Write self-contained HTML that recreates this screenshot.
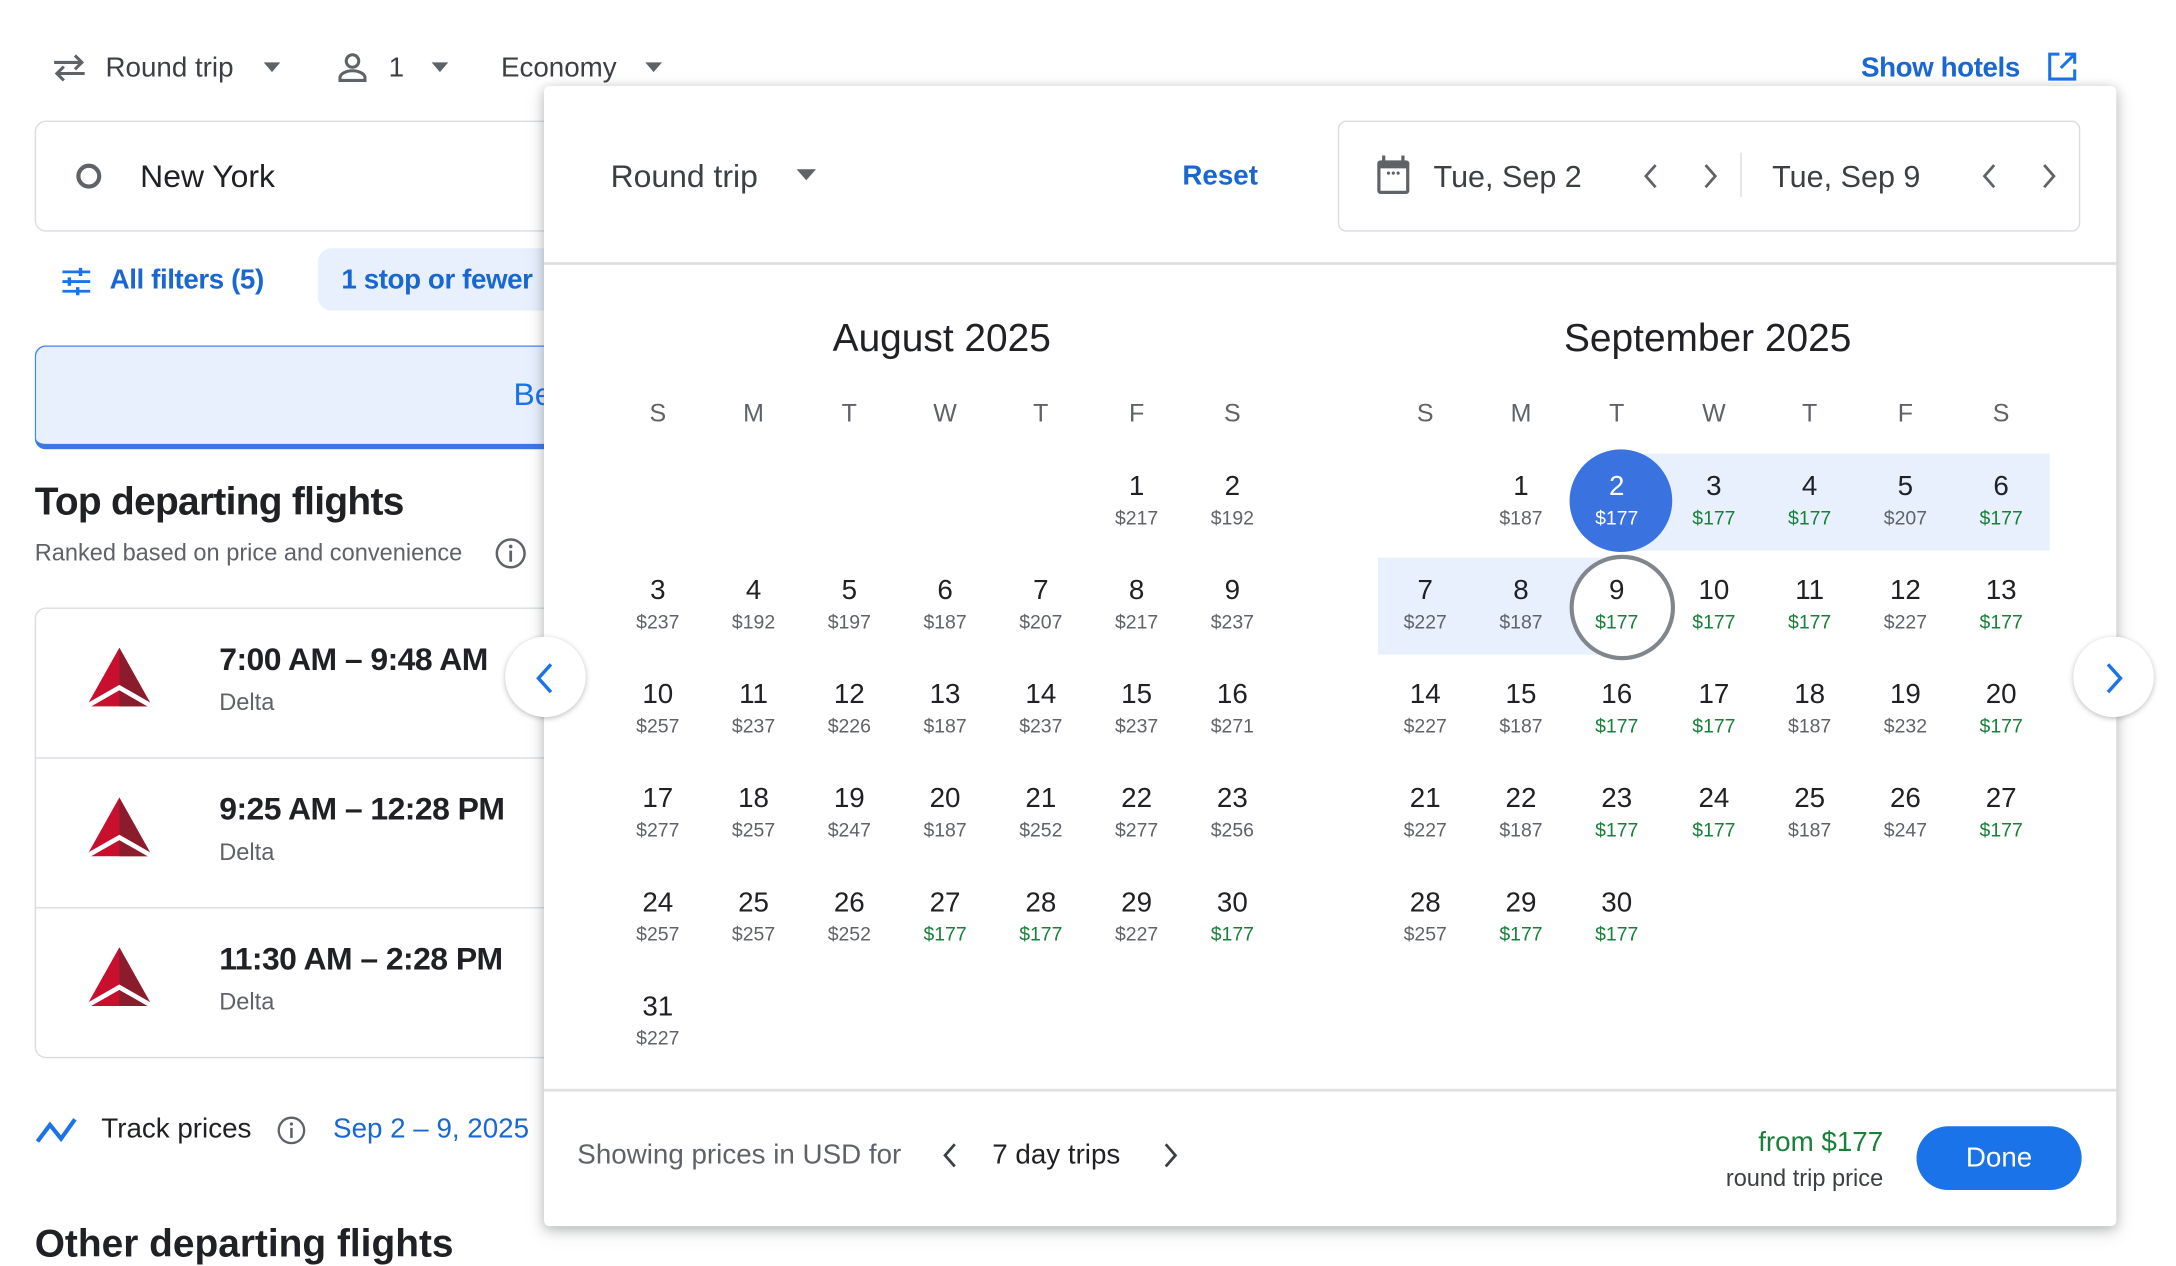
<!DOCTYPE html>
<html><head><meta charset="utf-8"><style>
html,body{margin:0;padding:0;background:#fff;overflow:hidden;width:2176px;height:1258px}
#w{position:absolute;left:0;top:0;width:1568px;height:907px;transform:scale(1.38776,1.38699);transform-origin:0 0;font-family:"Liberation Sans",Arial,sans-serif;color:#202124}
.a{position:absolute}
.c{position:absolute;width:70px;text-align:center}
.c b{display:block;font-weight:normal;font-size:20px;line-height:24px;color:#202124}
.c i{display:block;font-style:normal;font-size:14px;line-height:20px;color:#5f6368}
.c i.g{color:#188038}
.h{position:absolute;width:70px;text-align:center;font-size:18px;color:#5f6368;top:288px}
</style></head><body><div id="w">
<!-- top bar -->
<svg class="a" style="left:37px;top:37px" width="26" height="24" viewBox="0 0 26 24"><path d="M2 8h20M17 3l5 5-5 5M24 16H4M9 11l-5 5 5 5" fill="none" stroke="#5f6368" stroke-width="2.2"/></svg>
<div class="a" style="left:76px;top:38px;font-size:20px;color:#3c4043">Round trip</div>
<div class="a" style="left:190px;top:45px;border:6px solid transparent;border-top:7px solid #5f6368"></div>
<svg class="a" style="left:243px;top:37px" width="22" height="24" viewBox="0 0 22 24"><circle cx="11" cy="7" r="4.5" fill="none" stroke="#5f6368" stroke-width="2.2"/><path d="M2 21v-2c0-3 5-5 9-5s9 2 9 5v2z" fill="none" stroke="#5f6368" stroke-width="2.2"/></svg>
<div class="a" style="left:280px;top:38px;font-size:20px;color:#3c4043">1</div>
<div class="a" style="left:311px;top:45px;border:6px solid transparent;border-top:7px solid #5f6368"></div>
<div class="a" style="left:361px;top:38px;font-size:20px;color:#3c4043">Economy</div>
<div class="a" style="left:465px;top:45px;border:6px solid transparent;border-top:7px solid #5f6368"></div>
<div class="a" style="left:1341px;top:38px;font-size:20px;font-weight:bold;color:#1967d2;letter-spacing:-0.3px">Show hotels</div>
<svg class="a" style="left:1474px;top:36px" width="24" height="24" viewBox="0 0 24 24"><path d="M10 3H3v18h18v-7M14 3h7v7M21 3L11 13" fill="none" stroke="#1a73e8" stroke-width="2.2"/></svg>
<!-- left column -->
<div class="a" style="left:25px;top:87px;width:420px;height:78px;border:1px solid #dadce0;border-radius:8px"></div>
<div class="a" style="left:55px;top:118px;width:12px;height:12px;border:3.5px solid #5f6368;border-radius:50%"></div>
<div class="a" style="left:101px;top:114px;font-size:23px;color:#202124">New York</div>
<svg class="a" style="left:44px;top:193px" width="22" height="20" viewBox="0 0 22 20"><path d="M1 3h20M1 10h20M1 17h20" stroke="#1a73e8" stroke-width="2"/><path d="M14 0v6M6 7v6M12 14v6" stroke="#1a73e8" stroke-width="2.5"/></svg>
<div class="a" style="left:79px;top:191px;font-size:20px;color:#1967d2;font-weight:bold;letter-spacing:-0.3px">All filters (5)</div>
<div class="a" style="left:229px;top:179px;width:200px;height:45px;background:#e8f0fe;border-radius:10px"></div>
<div class="a" style="left:246px;top:191px;font-size:20px;color:#1967d2;font-weight:bold;letter-spacing:-0.3px">1 stop or fewer</div>
<div class="a" style="left:25px;top:249px;width:420px;height:70px;background:#e8f0fe;border:1px solid #4285f4;border-radius:8px;border-bottom:4px solid #3b78e7"></div>
<div class="a" style="left:370px;top:271px;font-size:23px;color:#1a73e8">Be</div>
<div class="a" style="left:25px;top:346px;font-size:28px;font-weight:bold;letter-spacing:-0.5px">Top departing flights</div>
<div class="a" style="left:25px;top:389px;font-size:17px;color:#5f6368">Ranked based on price and convenience</div>
<svg class="a" style="left:356px;top:387px" width="24" height="24" viewBox="0 0 24 24"><circle cx="12" cy="12" r="10" fill="none" stroke="#5f6368" stroke-width="1.8"/><path d="M12 10v8" stroke="#5f6368" stroke-width="2"/><circle cx="12" cy="7" r="1.3" fill="#5f6368"/></svg>
<div class="a" style="left:25px;top:438px;width:420px;height:323px;border:1px solid #dadce0;border-radius:8px"></div>
<div class="a" style="left:26px;top:546px;width:420px;height:1px;background:#dadce0"></div>
<div class="a" style="left:26px;top:654px;width:420px;height:1px;background:#dadce0"></div>
<svg class="a" style="left:60px;top:467px" width="52" height="44" viewBox="0 0 30 26"><path d="M15 0L1 25h28z" fill="#c8102e"/><path d="M15 0L29 25H15z" fill="#8a1c2b"/><path d="M1 25l14-8 14 8" fill="none" stroke="#fff" stroke-width="2"/></svg>
<svg class="a" style="left:60px;top:575px" width="52" height="44" viewBox="0 0 30 26"><path d="M15 0L1 25h28z" fill="#c8102e"/><path d="M15 0L29 25H15z" fill="#8a1c2b"/><path d="M1 25l14-8 14 8" fill="none" stroke="#fff" stroke-width="2"/></svg>
<svg class="a" style="left:60px;top:683px" width="52" height="44" viewBox="0 0 30 26"><path d="M15 0L1 25h28z" fill="#c8102e"/><path d="M15 0L29 25H15z" fill="#8a1c2b"/><path d="M1 25l14-8 14 8" fill="none" stroke="#fff" stroke-width="2"/></svg>
<div class="a" style="left:158px;top:462px;font-size:23px;font-weight:bold;letter-spacing:-0.4px">7:00 AM – 9:48 AM</div>
<div class="a" style="left:158px;top:497px;font-size:17px;color:#5f6368">Delta</div>
<div class="a" style="left:158px;top:570px;font-size:23px;font-weight:bold;letter-spacing:-0.4px">9:25 AM – 12:28 PM</div>
<div class="a" style="left:158px;top:605px;font-size:17px;color:#5f6368">Delta</div>
<div class="a" style="left:158px;top:678px;font-size:23px;font-weight:bold;letter-spacing:-0.4px">11:30 AM – 2:28 PM</div>
<div class="a" style="left:158px;top:713px;font-size:17px;color:#5f6368">Delta</div>
<svg class="a" style="left:25px;top:803px" width="34" height="24" viewBox="0 0 34 24"><path d="M2 20l9-12 8 10 10-14" fill="none" stroke="#1a73e8" stroke-width="3"/></svg>
<div class="a" style="left:73px;top:803px;font-size:20px">Track prices</div>
<svg class="a" style="left:199px;top:804px" width="22" height="22" viewBox="0 0 24 24"><circle cx="12" cy="12" r="10" fill="none" stroke="#5f6368" stroke-width="1.8"/><path d="M12 10v8" stroke="#5f6368" stroke-width="2"/><circle cx="12" cy="7" r="1.3" fill="#5f6368"/></svg>
<div class="a" style="left:240px;top:803px;font-size:20px;color:#1967d2">Sep 2 – 9, 2025</div>
<div class="a" style="left:25px;top:881px;font-size:28px;font-weight:bold">Other departing flights</div>
<!-- popup -->
<div class="a" style="left:392px;top:62px;width:1133px;height:822px;background:#fff;border-radius:4px;box-shadow:0 2px 8px rgba(60,64,67,.3),0 4px 14px rgba(60,64,67,.15)"></div>
<div class="a" style="left:440px;top:114px;font-size:23px;color:#3c4043">Round trip</div>
<div class="a" style="left:574px;top:122px;border:7px solid transparent;border-top:8px solid #5f6368"></div>
<div class="a" style="left:852px;top:116px;font-size:20px;color:#1967d2;font-weight:bold">Reset</div>
<div class="a" style="left:964px;top:87px;width:533px;height:78px;border:1px solid #dadce0;border-radius:6px"></div>
<div class="a" style="left:1254px;top:110px;width:1px;height:32px;background:#dadce0"></div>
<svg class="a" style="left:990px;top:111px" width="28" height="30" viewBox="0 0 24 26"><rect x="2" y="4" width="20" height="21" rx="2" fill="#5f6368"/><rect x="4" y="9" width="16" height="14" fill="#fff"/><path d="M6 1v5M18 1v5" stroke="#5f6368" stroke-width="2"/><circle cx="9" cy="12" r="1" fill="#5f6368"/><circle cx="12" cy="12" r="1" fill="#5f6368"/><circle cx="15" cy="12" r="1" fill="#5f6368"/></svg>
<div class="a" style="left:1033px;top:115px;font-size:22px;color:#3c4043">Tue, Sep 2</div>
<div class="a" style="left:1277px;top:115px;font-size:22px;color:#3c4043">Tue, Sep 9</div>
<svg class="a" style="left:1180px;top:116px" width="20" height="22" viewBox="0 0 20 22"><path d="M13 3l-7 8 7 8" fill="none" stroke="#5f6368" stroke-width="2"/></svg>
<svg class="a" style="left:1222px;top:116px" width="20" height="22" viewBox="0 0 20 22"><path d="M7 3l7 8-7 8" fill="none" stroke="#5f6368" stroke-width="2"/></svg>
<svg class="a" style="left:1424px;top:116px" width="20" height="22" viewBox="0 0 20 22"><path d="M13 3l-7 8 7 8" fill="none" stroke="#5f6368" stroke-width="2"/></svg>
<svg class="a" style="left:1466px;top:116px" width="20" height="22" viewBox="0 0 20 22"><path d="M7 3l7 8-7 8" fill="none" stroke="#5f6368" stroke-width="2"/></svg>
<div class="a" style="left:392px;top:189px;width:1133px;height:2px;background:#e0e0e0"></div>
<div class="a" style="left:392px;top:785px;width:1133px;height:2px;background:#e0e0e0"></div>
<div class="a" style="left:600px;top:228px;font-size:28px;color:#202124">August 2025</div>
<div class="a" style="left:1127px;top:228px;font-size:28px;color:#202124">September 2025</div>
<!-- weekday headers -->
<div class="h" style="left:439px">S</div><div class="h" style="left:508px">M</div><div class="h" style="left:577px">T</div><div class="h" style="left:646px">W</div><div class="h" style="left:715px">T</div><div class="h" style="left:784px">F</div><div class="h" style="left:853px">S</div>
<div class="h" style="left:992px">S</div><div class="h" style="left:1061px">M</div><div class="h" style="left:1130px">T</div><div class="h" style="left:1200px">W</div><div class="h" style="left:1269px">T</div><div class="h" style="left:1338px">F</div><div class="h" style="left:1407px">S</div>
<!-- range highlight -->
<div class="a" style="left:1167px;top:327px;width:310px;height:70px;background:#e8f0fe"></div>
<div class="a" style="left:993px;top:402px;width:172px;height:70px;background:#e8f0fe"></div>
<div class="a" style="left:1131px;top:324px;width:74px;height:74px;border-radius:50%;background:#3a73e0"></div>
<div class="a" style="left:1131px;top:400px;width:70px;height:70px;border-radius:50%;border:3px solid #80868b;background:#fff"></div>
<!-- August -->
<div class="c" style="left:784px;top:339px"><b>1</b><i>$217</i></div>
<div class="c" style="left:853px;top:339px"><b>2</b><i>$192</i></div>
<div class="c" style="left:439px;top:414px"><b>3</b><i>$237</i></div>
<div class="c" style="left:508px;top:414px"><b>4</b><i>$192</i></div>
<div class="c" style="left:577px;top:414px"><b>5</b><i>$197</i></div>
<div class="c" style="left:646px;top:414px"><b>6</b><i>$187</i></div>
<div class="c" style="left:715px;top:414px"><b>7</b><i>$207</i></div>
<div class="c" style="left:784px;top:414px"><b>8</b><i>$217</i></div>
<div class="c" style="left:853px;top:414px"><b>9</b><i>$237</i></div>
<div class="c" style="left:439px;top:489px"><b>10</b><i>$257</i></div>
<div class="c" style="left:508px;top:489px"><b>11</b><i>$237</i></div>
<div class="c" style="left:577px;top:489px"><b>12</b><i>$226</i></div>
<div class="c" style="left:646px;top:489px"><b>13</b><i>$187</i></div>
<div class="c" style="left:715px;top:489px"><b>14</b><i>$237</i></div>
<div class="c" style="left:784px;top:489px"><b>15</b><i>$237</i></div>
<div class="c" style="left:853px;top:489px"><b>16</b><i>$271</i></div>
<div class="c" style="left:439px;top:564px"><b>17</b><i>$277</i></div>
<div class="c" style="left:508px;top:564px"><b>18</b><i>$257</i></div>
<div class="c" style="left:577px;top:564px"><b>19</b><i>$247</i></div>
<div class="c" style="left:646px;top:564px"><b>20</b><i>$187</i></div>
<div class="c" style="left:715px;top:564px"><b>21</b><i>$252</i></div>
<div class="c" style="left:784px;top:564px"><b>22</b><i>$277</i></div>
<div class="c" style="left:853px;top:564px"><b>23</b><i>$256</i></div>
<div class="c" style="left:439px;top:639px"><b>24</b><i>$257</i></div>
<div class="c" style="left:508px;top:639px"><b>25</b><i>$257</i></div>
<div class="c" style="left:577px;top:639px"><b>26</b><i>$252</i></div>
<div class="c" style="left:646px;top:639px"><b>27</b><i class="g">$177</i></div>
<div class="c" style="left:715px;top:639px"><b>28</b><i class="g">$177</i></div>
<div class="c" style="left:784px;top:639px"><b>29</b><i>$227</i></div>
<div class="c" style="left:853px;top:639px"><b>30</b><i class="g">$177</i></div>
<div class="c" style="left:439px;top:714px"><b>31</b><i>$227</i></div>
<!-- September -->
<div class="c" style="left:1061px;top:339px"><b>1</b><i>$187</i></div>
<div class="c" style="left:1130px;top:339px"><b style="color:#fff">2</b><i style="color:#fff">$177</i></div>
<div class="c" style="left:1200px;top:339px"><b>3</b><i class="g">$177</i></div>
<div class="c" style="left:1269px;top:339px"><b>4</b><i class="g">$177</i></div>
<div class="c" style="left:1338px;top:339px"><b>5</b><i>$207</i></div>
<div class="c" style="left:1407px;top:339px"><b>6</b><i class="g">$177</i></div>
<div class="c" style="left:992px;top:414px"><b>7</b><i>$227</i></div>
<div class="c" style="left:1061px;top:414px"><b>8</b><i>$187</i></div>
<div class="c" style="left:1130px;top:414px"><b>9</b><i class="g">$177</i></div>
<div class="c" style="left:1200px;top:414px"><b>10</b><i class="g">$177</i></div>
<div class="c" style="left:1269px;top:414px"><b>11</b><i class="g">$177</i></div>
<div class="c" style="left:1338px;top:414px"><b>12</b><i>$227</i></div>
<div class="c" style="left:1407px;top:414px"><b>13</b><i class="g">$177</i></div>
<div class="c" style="left:992px;top:489px"><b>14</b><i>$227</i></div>
<div class="c" style="left:1061px;top:489px"><b>15</b><i>$187</i></div>
<div class="c" style="left:1130px;top:489px"><b>16</b><i class="g">$177</i></div>
<div class="c" style="left:1200px;top:489px"><b>17</b><i class="g">$177</i></div>
<div class="c" style="left:1269px;top:489px"><b>18</b><i>$187</i></div>
<div class="c" style="left:1338px;top:489px"><b>19</b><i>$232</i></div>
<div class="c" style="left:1407px;top:489px"><b>20</b><i class="g">$177</i></div>
<div class="c" style="left:992px;top:564px"><b>21</b><i>$227</i></div>
<div class="c" style="left:1061px;top:564px"><b>22</b><i>$187</i></div>
<div class="c" style="left:1130px;top:564px"><b>23</b><i class="g">$177</i></div>
<div class="c" style="left:1200px;top:564px"><b>24</b><i class="g">$177</i></div>
<div class="c" style="left:1269px;top:564px"><b>25</b><i>$187</i></div>
<div class="c" style="left:1338px;top:564px"><b>26</b><i>$247</i></div>
<div class="c" style="left:1407px;top:564px"><b>27</b><i class="g">$177</i></div>
<div class="c" style="left:992px;top:639px"><b>28</b><i>$257</i></div>
<div class="c" style="left:1061px;top:639px"><b>29</b><i class="g">$177</i></div>
<div class="c" style="left:1130px;top:639px"><b>30</b><i class="g">$177</i></div>
<!-- side nav buttons -->
<div class="a" style="left:364px;top:459px;width:58px;height:58px;border-radius:50%;background:#fff;box-shadow:0 1px 4px rgba(60,64,67,.35)"></div>
<svg class="a" style="left:382px;top:476px" width="22" height="26" viewBox="0 0 22 26"><path d="M15 3l-9 10 9 10" fill="none" stroke="#1a73e8" stroke-width="2.5"/></svg>
<div class="a" style="left:1494px;top:459px;width:58px;height:58px;border-radius:50%;background:#fff;box-shadow:0 1px 4px rgba(60,64,67,.35)"></div>
<svg class="a" style="left:1512px;top:476px" width="22" height="26" viewBox="0 0 22 26"><path d="M7 3l9 10-9 10" fill="none" stroke="#1a73e8" stroke-width="2.5"/></svg>
<!-- footer -->
<div class="a" style="left:416px;top:822px;font-size:20px;color:#5f6368">Showing prices in USD for</div>
<svg class="a" style="left:676px;top:822px" width="18" height="22" viewBox="0 0 18 22"><path d="M12 3l-7 8 7 8" fill="none" stroke="#3c4043" stroke-width="2"/></svg>
<div class="a" style="left:715px;top:822px;font-size:20px;color:#202124">7 day trips</div>
<svg class="a" style="left:834px;top:822px" width="18" height="22" viewBox="0 0 18 22"><path d="M6 3l7 8-7 8" fill="none" stroke="#3c4043" stroke-width="2"/></svg>
<div class="a" style="left:1200px;top:813px;width:157px;text-align:right;font-size:20px;color:#188038">from $177</div>
<div class="a" style="left:1200px;top:840px;width:157px;text-align:right;font-size:17px;color:#3c4043">round trip price</div>
<div class="a" style="left:1381px;top:812px;width:119px;height:46px;border-radius:23px;background:#1a73e8;color:#fff;font-size:20px;text-align:center;line-height:46px">Done</div>
</div></body></html>
